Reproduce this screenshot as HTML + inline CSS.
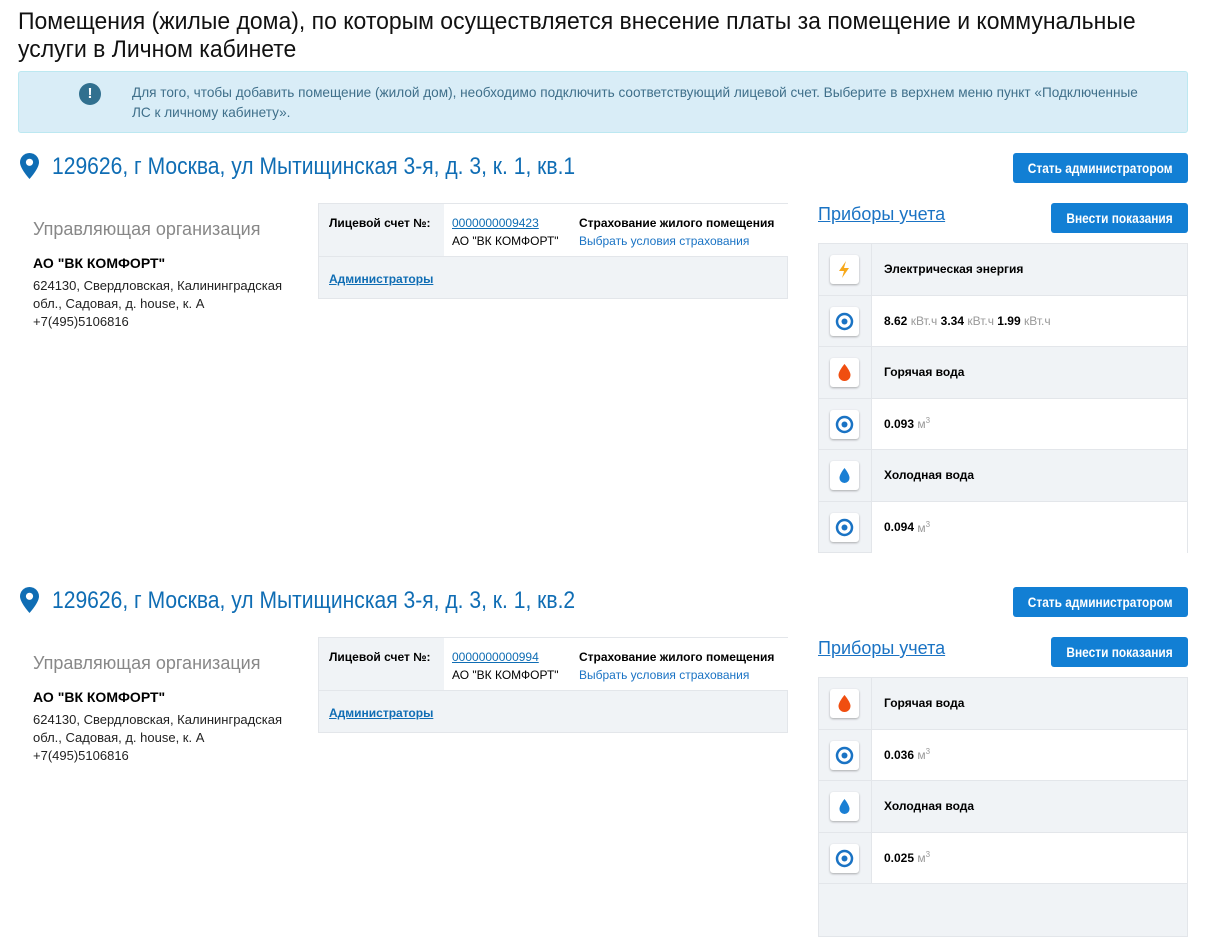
<!DOCTYPE html>
<html><head><meta charset="utf-8"><style>
*{margin:0;padding:0;box-sizing:border-box}
body{width:1205px;height:888px;overflow:hidden;background:#fff;font-family:"Liberation Sans",Arial,sans-serif;color:#000;position:relative}
.a{position:absolute}
.sec{position:absolute;left:0;width:1205px;height:454px}
.cond{display:inline-block;white-space:nowrap;transform-origin:0 0}
h1{position:absolute;left:18px;top:8px;font-weight:normal;font-size:24px;line-height:28px;color:#111}
.alert{left:18px;top:71px;width:1170px;height:62px;background:#d9edf7;border:1px solid #bce8f1;border-radius:3px}
.alert .t{position:absolute;left:113px;top:11px;font-size:13.6px;line-height:20px;color:#3f6f8a;width:1050px}
.ex{position:absolute;left:60px;top:11px;width:22px;height:22px;border-radius:50%;background:#31708f;color:#fff;font-weight:bold;font-size:15px;text-align:center;line-height:22px}
.addr{font-size:24px;color:#0f6db4;text-decoration:underline;text-decoration-thickness:2px;text-underline-offset:3px;white-space:nowrap}
.btn{background:#127fd4;color:#fff;border-radius:3px;text-align:center;font-size:14px;font-weight:bold;white-space:nowrap}
.btn span{display:inline-block;transform:scaleX(.85)}
.org{font-size:18px;color:#888;white-space:nowrap}
.small{font-size:13px;line-height:18px;color:#222;white-space:nowrap}
.acc{border:1px solid #e3e6ea;background:#f0f3f6;width:470px;height:96px}
.acc .w{position:absolute;left:125px;top:0;width:344px;height:52px;background:#fff}
.acc .bt{border-top:1px solid #e3e6ea;position:absolute;left:0;top:52px;width:468px}
.f12{font-size:12px;line-height:18px;white-space:nowrap}
.lnk{color:#0f6db4;text-decoration:underline;white-space:nowrap}
.blue{color:#1a73c4}
.met{left:818px;width:370px;border:1px solid #e3e6ea;background:#f0f3f6}
.row{height:51.5px;position:relative;border-bottom:1px solid #e3e6ea}
.row.w .r{background:#fff}
.row .r{position:absolute;left:52px;top:0;right:0;bottom:0;border-left:1px solid #e3e6ea;padding:0 0 0 12px;font-size:12px;font-weight:bold;display:flex;align-items:center}
.ic{position:absolute;left:11px;top:11px;width:29px;height:29px;background:#fff;border-radius:3px;box-shadow:0 1px 2px rgba(0,0,0,.3)}
.ic svg{position:absolute;left:0;top:0}
.u{color:#999;font-weight:normal}
.u sup{font-size:8px}
</style></head><body>
<h1><span class="cond" style="transform:scaleX(.957)">Помещения (жилые дома), по которым осуществляется внесение платы за помещение и коммунальные</span><br><span class="cond" style="transform:scaleX(.957)">услуги в Личном кабинете</span></h1>
<div class="a alert"><div class="ex">!</div><div class="t">Для того, чтобы добавить помещение (жилой дом), необходимо подключить соответствующий лицевой счет. Выберите в верхнем меню пункт «Подключенные ЛС&nbsp;к&nbsp;личному кабинету».</div></div>

<div class="sec" style="top:0">
<svg class="a" style="left:20px;top:153px" width="19" height="26" viewBox="0 0 19 26"><path d="M9.5 0C4.2 0 0 4.2 0 9.3c0 6.5 9.5 16.7 9.5 16.7S19 15.8 19 9.3C19 4.2 14.8 0 9.5 0z" fill="#0f6db4"/><circle cx="9.5" cy="9.3" r="3.6" fill="#fff"/></svg>
<div class="a addr" style="left:52px;top:153px"><span class="cond" style="transform:scaleX(.878)">129626, г Москва, ул Мытищинская 3-я, д. 3, к. 1, кв.1</span></div>
<div class="a btn" style="left:1013px;top:153px;width:175px;height:30px;line-height:30px"><span>Стать администратором</span></div>
<div class="a org" style="left:33px;top:219px">Управляющая организация</div>
<div class="a" style="left:33px;top:255px;font-size:14px;font-weight:bold;white-space:nowrap">АО "ВК КОМФОРТ"</div>
<div class="a small" style="left:33px;top:277px">624130, Свердловская, Калининградская<br>обл., Садовая, д. house, к. А<br>+7(495)5106816</div>
<div class="a acc" style="left:318px;top:203px">
 <div class="a f12" style="left:10px;top:10px;font-weight:bold">Лицевой счет №:</div>
 <div class="w"><div class="a f12" style="left:8px;top:10px"><span class="lnk">0000000009423</span><br>АО "ВК КОМФОРТ"</div>
 <div class="a f12" style="left:135px;top:10px"><b>Страхование жилого помещения</b><br><span class="blue">Выбрать условия страхования</span></div></div>
 <div class="bt"></div>
 <div class="a f12 lnk" style="left:10px;top:66px;font-weight:bold">Администраторы</div>
</div>
<div class="a lnk" style="left:818px;top:204px;font-size:18px;color:#1a73c4">Приборы учета</div>
<div class="a btn" style="left:1051px;top:203px;width:137px;height:30px;line-height:30px"><span>Внести показания</span></div>
<div class="a met" style="top:243px;height:310px">
 <div class="row"><div class="ic"><svg width="29" height="29"><path d="M16 6l-7 10h5l-2 7 7-10h-5z" fill="#f7a81b"/></svg></div><div class="r">Электрическая энергия</div></div>
 <div class="row w"><div class="ic"><svg width="29" height="29"><circle cx="14.5" cy="14.5" r="7.5" fill="none" stroke="#1a73c4" stroke-width="2.5"/><circle cx="14.5" cy="14.5" r="3" fill="#1a73c4"/></svg></div><div class="r">8.62&nbsp;<span class="u">кВт.ч</span>&nbsp;3.34&nbsp;<span class="u">кВт.ч</span>&nbsp;1.99&nbsp;<span class="u">кВт.ч</span></div></div>
 <div class="row"><div class="ic"><svg width="29" height="29"><path d="M14.5 6c0 0-6 7-6 11a6 6 0 0 0 12 0c0-4-6-11-6-11z" fill="#f04e10"/></svg></div><div class="r">Горячая вода</div></div>
 <div class="row w"><div class="ic"><svg width="29" height="29"><circle cx="14.5" cy="14.5" r="7.5" fill="none" stroke="#1a73c4" stroke-width="2.5"/><circle cx="14.5" cy="14.5" r="3" fill="#1a73c4"/></svg></div><div class="r">0.093&nbsp;<span class="u">м<sup>3</sup></span></div></div>
 <div class="row"><div class="ic"><svg width="29" height="29"><path d="M14.5 7c0 0-5 6-5 10a5 5 0 0 0 10 0c0-4-5-10-5-10z" fill="#1a7fd4"/></svg></div><div class="r">Холодная вода</div></div>
 <div class="row w" style="border-bottom:0"><div class="ic"><svg width="29" height="29"><circle cx="14.5" cy="14.5" r="7.5" fill="none" stroke="#1a73c4" stroke-width="2.5"/><circle cx="14.5" cy="14.5" r="3" fill="#1a73c4"/></svg></div><div class="r">0.094&nbsp;<span class="u">м<sup>3</sup></span></div></div>
</div>
</div>

<div class="sec" style="top:434px">
<svg class="a" style="left:20px;top:153px" width="19" height="26" viewBox="0 0 19 26"><path d="M9.5 0C4.2 0 0 4.2 0 9.3c0 6.5 9.5 16.7 9.5 16.7S19 15.8 19 9.3C19 4.2 14.8 0 9.5 0z" fill="#0f6db4"/><circle cx="9.5" cy="9.3" r="3.6" fill="#fff"/></svg>
<div class="a addr" style="left:52px;top:153px"><span class="cond" style="transform:scaleX(.878)">129626, г Москва, ул Мытищинская 3-я, д. 3, к. 1, кв.2</span></div>
<div class="a btn" style="left:1013px;top:153px;width:175px;height:30px;line-height:30px"><span>Стать администратором</span></div>
<div class="a org" style="left:33px;top:219px">Управляющая организация</div>
<div class="a" style="left:33px;top:255px;font-size:14px;font-weight:bold;white-space:nowrap">АО "ВК КОМФОРТ"</div>
<div class="a small" style="left:33px;top:277px">624130, Свердловская, Калининградская<br>обл., Садовая, д. house, к. А<br>+7(495)5106816</div>
<div class="a acc" style="left:318px;top:203px">
 <div class="a f12" style="left:10px;top:10px;font-weight:bold">Лицевой счет №:</div>
 <div class="w"><div class="a f12" style="left:8px;top:10px"><span class="lnk">0000000000994</span><br>АО "ВК КОМФОРТ"</div>
 <div class="a f12" style="left:135px;top:10px"><b>Страхование жилого помещения</b><br><span class="blue">Выбрать условия страхования</span></div></div>
 <div class="bt"></div>
 <div class="a f12 lnk" style="left:10px;top:66px;font-weight:bold">Администраторы</div>
</div>
<div class="a lnk" style="left:818px;top:204px;font-size:18px;color:#1a73c4">Приборы учета</div>
<div class="a btn" style="left:1051px;top:203px;width:137px;height:30px;line-height:30px"><span>Внести показания</span></div>
<div class="a met" style="top:243px;height:260px">
 <div class="row"><div class="ic"><svg width="29" height="29"><path d="M14.5 6c0 0-6 7-6 11a6 6 0 0 0 12 0c0-4-6-11-6-11z" fill="#f04e10"/></svg></div><div class="r">Горячая вода</div></div>
 <div class="row w"><div class="ic"><svg width="29" height="29"><circle cx="14.5" cy="14.5" r="7.5" fill="none" stroke="#1a73c4" stroke-width="2.5"/><circle cx="14.5" cy="14.5" r="3" fill="#1a73c4"/></svg></div><div class="r">0.036&nbsp;<span class="u">м<sup>3</sup></span></div></div>
 <div class="row"><div class="ic"><svg width="29" height="29"><path d="M14.5 7c0 0-5 6-5 10a5 5 0 0 0 10 0c0-4-5-10-5-10z" fill="#1a7fd4"/></svg></div><div class="r">Холодная вода</div></div>
 <div class="row w"><div class="ic"><svg width="29" height="29"><circle cx="14.5" cy="14.5" r="7.5" fill="none" stroke="#1a73c4" stroke-width="2.5"/><circle cx="14.5" cy="14.5" r="3" fill="#1a73c4"/></svg></div><div class="r">0.025&nbsp;<span class="u">м<sup>3</sup></span></div></div>
</div>
</div>
</body></html>
